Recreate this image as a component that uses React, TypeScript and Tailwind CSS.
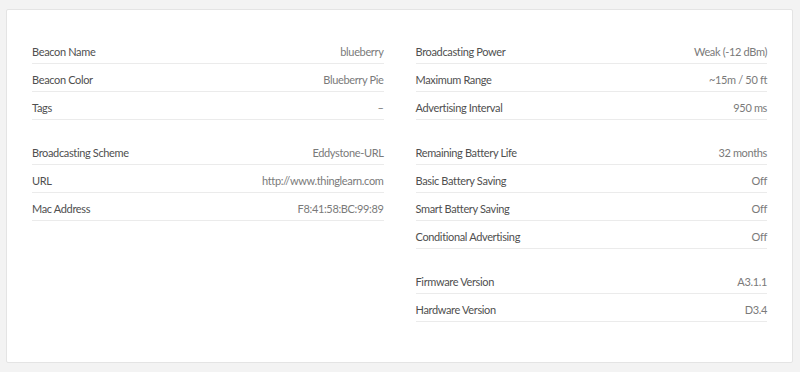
import React from 'react';

type Row = { label: string; value: string };

const leftGroups: Row[][] = [
  [
    { label: 'Beacon Name', value: 'blueberry' },
    { label: 'Beacon Color', value: 'Blueberry Pie' },
    { label: 'Tags', value: '–' }
  ],
  [
    { label: 'Broadcasting Scheme', value: 'Eddystone-URL' },
    { label: 'URL', value: 'http://www.thinglearn.com' },
    { label: 'Mac Address', value: 'F8:41:58:BC:99:89' }
  ]
];

const rightGroups: Row[][] = [
  [
    { label: 'Broadcasting Power', value: 'Weak (-12 dBm)' },
    { label: 'Maximum Range', value: '~15m / 50 ft' },
    { label: 'Advertising Interval', value: '950 ms' }
  ],
  [
    { label: 'Remaining Battery Life', value: '32 months' },
    { label: 'Basic Battery Saving', value: 'Off' },
    { label: 'Smart Battery Saving', value: 'Off' },
    { label: 'Conditional Advertising', value: 'Off' }
  ],
  [
    { label: 'Firmware Version', value: 'A3.1.1' },
    { label: 'Hardware Version', value: 'D3.4' }
  ]
];

function Column({ groups }: { groups: Row[][] }) {
  return (
    <div className="flex flex-col gap-[17px]">
      {groups.map((group, gi) =>
      <div key={gi} className="flex flex-col">
          {group.map((row) =>
        <div
          key={row.label}
          className="h-[28px] pt-[8px] flex justify-between leading-4 border-b border-[#ebebeb]">
          
              <span className="text-[#4f4f4f]">{row.label}</span>
              <span className="text-[#7a7a7a]">{row.value}</span>
            </div>
        )}
        </div>
      )}
    </div>);

}

export default function App() {
  return (
    <div
      className="w-[800px] h-[372px] bg-[#f3f3f3] pt-[9px] pl-[6px] pr-[7px] pb-[9px] text-[11px] tracking-[-0.35px]"
      style={{ fontFamily: 'Lato, "Open Sans", sans-serif' }}>
      
      <div className="h-full bg-white border border-[#e4e4e4] rounded-[2px] pt-[26px] px-[25px] grid grid-cols-2 gap-8 items-start">
        <Column groups={leftGroups} />
        <Column groups={rightGroups} />
      </div>
    </div>);

}
